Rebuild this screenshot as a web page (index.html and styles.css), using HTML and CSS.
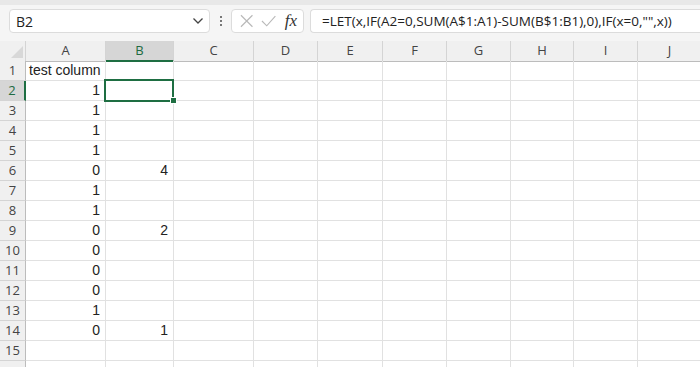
FILE: index.html
```html
<!DOCTYPE html>
<html lang="en">
  <head>
    <meta charset="UTF-8" />
    <title>Sheet1</title>
    <link rel="stylesheet" href="styles.css">
  </head>
  <body>
    <div class="toolbar">
      <div class="namebox">
        <span>B2</span>
        <svg class="chevron" width="12" height="8" viewBox="0 0 12 8"><path d="M1.5 1.5 L6 6 L10.5 1.5" fill="none" stroke="#444" stroke-width="1.3"/></svg>
      </div>
      <div class="dots"><i></i><i></i><i></i></div>
      <div class="fxbox">
        <svg width="14" height="14" viewBox="0 0 14 14"><path d="M1 1 L13 13 M13 1 L1 13" stroke="#b9b9b9" stroke-width="1.2" fill="none"/></svg>
        <svg width="16" height="14" viewBox="0 0 16 14"><path d="M1 7 L6 12 L15 2" stroke="#b9b9b9" stroke-width="1.2" fill="none"/></svg>
        <span class="fx">fx</span>
      </div>
      <div class="formula">=LET(x,IF(A2=0,SUM(A$1:A1)-SUM(B$1:B1),0),IF(x=0,"",x))</div>
    </div>

    <div class="sheet">
      <div class="row head">
        <div class="corner"><svg width="12" height="12" viewBox="0 0 12 12"><path d="M12 0 L12 12 L0 12 Z" fill="#d8d8d8"/></svg></div>
        <div>A</div><div class="sel">B</div><div>C</div><div>D</div><div>E</div>
        <div>F</div><div>G</div><div>H</div><div>I</div><div>J</div>
      </div>
      <div class="row"><div class="num">1</div><div class="txt">test column</div><div></div><div></div><div></div><div></div><div></div><div></div><div></div><div></div><div></div></div>
      <div class="row"><div class="num sel">2</div><div>1</div><div class="active"></div><div></div><div></div><div></div><div></div><div></div><div></div><div></div><div></div></div>
      <div class="row"><div class="num">3</div><div>1</div><div></div><div></div><div></div><div></div><div></div><div></div><div></div><div></div><div></div></div>
      <div class="row"><div class="num">4</div><div>1</div><div></div><div></div><div></div><div></div><div></div><div></div><div></div><div></div><div></div></div>
      <div class="row"><div class="num">5</div><div>1</div><div></div><div></div><div></div><div></div><div></div><div></div><div></div><div></div><div></div></div>
      <div class="row"><div class="num">6</div><div>0</div><div>4</div><div></div><div></div><div></div><div></div><div></div><div></div><div></div><div></div></div>
      <div class="row"><div class="num">7</div><div>1</div><div></div><div></div><div></div><div></div><div></div><div></div><div></div><div></div><div></div></div>
      <div class="row"><div class="num">8</div><div>1</div><div></div><div></div><div></div><div></div><div></div><div></div><div></div><div></div><div></div></div>
      <div class="row"><div class="num">9</div><div>0</div><div>2</div><div></div><div></div><div></div><div></div><div></div><div></div><div></div><div></div></div>
      <div class="row"><div class="num">10</div><div>0</div><div></div><div></div><div></div><div></div><div></div><div></div><div></div><div></div><div></div></div>
      <div class="row"><div class="num">11</div><div>0</div><div></div><div></div><div></div><div></div><div></div><div></div><div></div><div></div><div></div></div>
      <div class="row"><div class="num">12</div><div>0</div><div></div><div></div><div></div><div></div><div></div><div></div><div></div><div></div><div></div></div>
      <div class="row"><div class="num">13</div><div>1</div><div></div><div></div><div></div><div></div><div></div><div></div><div></div><div></div><div></div></div>
      <div class="row"><div class="num">14</div><div>0</div><div>1</div><div></div><div></div><div></div><div></div><div></div><div></div><div></div><div></div></div>
      <div class="row"><div class="num">15</div><div></div><div></div><div></div><div></div><div></div><div></div><div></div><div></div><div></div><div></div></div>
      <div class="row"><div class="num"></div><div></div><div></div><div></div><div></div><div></div><div></div><div></div><div></div><div></div><div></div></div>
    </div>
  </body>
</html>
```

FILE: styles.css
```css
body {
  margin: 0;
  font-family: "Liberation Sans", Arial, sans-serif;
  background: #fff;
  color: #222;
  overflow: hidden;
}

.toolbar {
  display: flex;
  align-items: center;
  height: 41px;
  box-sizing: border-box;
  padding: 4px 0 8px 9px;
  background: #f5f5f5;
  border-top: 5px solid #e8e8e8;
}

.namebox {
  width: 201px;
  height: 24px;
  box-sizing: border-box;
  background: #fff;
  border: 1px solid #dcdcdc;
  border-radius: 4px;
  display: flex;
  align-items: center;
  justify-content: space-between;
  padding: 0 5px 0 6px;
  font-family: "Open Sans", sans-serif;
  font-size: 14px;
  color: #222;
}

.dots {
  width: 21px;
  display: flex;
  flex-direction: column;
  align-items: center;
  gap: 2px;
}

.dots i {
  width: 2px;
  height: 2px;
  background: #777;
}

.fxbox {
  width: 73px;
  height: 24px;
  box-sizing: border-box;
  background: #fff;
  border: 1px solid #dcdcdc;
  border-radius: 4px;
  display: flex;
  align-items: center;
  gap: 8px;
  padding: 0 6px 0 8px;
}

.fx {
  margin-left: auto;
  font-family: "Liberation Serif", serif;
  font-style: italic;
  font-size: 17px;
  color: #333;
}

.formula {
  flex: 1;
  height: 24px;
  box-sizing: border-box;
  margin-left: 6px;
  background: #fff;
  border: 1px solid #dcdcdc;
  border-right: none;
  border-radius: 4px 0 0 4px;
  padding: 2px 0 0 11px;
  font-family: "Open Sans", sans-serif;
  font-size: 13.5px;
  color: #222;
  white-space: nowrap;
}

.row {
  display: grid;
  grid-template-columns: 26px 80px 68px 80px 64px 65px 64px 64px 63px 64px 64px;
  height: 20px;
}

.row > div {
  box-sizing: border-box;
  border-right: 1px solid #e1e1e1;
  border-bottom: 1px solid #e1e1e1;
  font-size: 14px;
  line-height: 19px;
  text-align: right;
  padding-right: 5px;
}

.row .txt {
  text-align: left;
  padding-left: 3px;
  white-space: nowrap;
}

.head > div {
  background: #f0f0f0;
  border-right-color: #d4d4d4;
  border-bottom-color: #bcbcbc;
  font-family: "Open Sans", sans-serif;
  font-size: 13px;
  color: #444;
  text-align: center;
  padding: 0;
}

.head .corner {
  display: flex;
  align-items: flex-end;
  justify-content: flex-end;
  padding: 0 2px 3px 0;
}

.head .sel {
  background: #d6d6d6;
  color: #1e6b41;
  border-bottom: 2px solid #1e6e42;
}

.row .num {
  background: #f0f0f0;
  border-right-color: #bcbcbc;
  border-bottom-color: #d4d4d4;
  font-family: "Open Sans", sans-serif;
  font-size: 13px;
  color: #444;
  text-align: center;
  padding: 0;
}

.row .num.sel {
  background: #d6d6d6;
  color: #1e6b41;
  border-right: 2px solid #1e6e42;
}

.active {
  position: relative;
}

.active::after {
  content: "";
  position: absolute;
  left: -2px;
  top: -2px;
  right: -1px;
  bottom: -2px;
  border: 2px solid #1e6e42;
}

.active::before {
  content: "";
  position: absolute;
  right: -4px;
  bottom: -4px;
  width: 5px;
  height: 5px;
  background: #1e6e42;
  border: 1px solid #fff;
  z-index: 1;
}
```
